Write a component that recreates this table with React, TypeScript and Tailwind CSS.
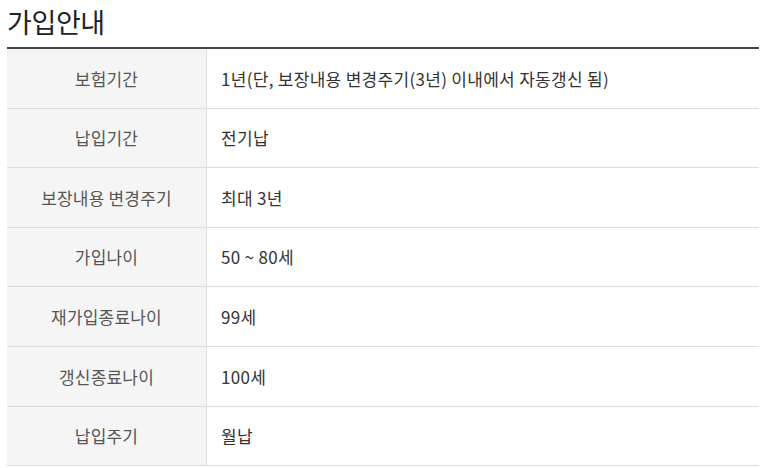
import React from 'react';

const rows = [
  { label: '보험기간', value: '1년(단, 보장내용 변경주기(3년) 이내에서 자동갱신 됨)' },
  { label: '납입기간', value: '전기납' },
  { label: '보장내용 변경주기', value: '최대 3년' },
  { label: '가입나이', value: '50 ~ 80세' },
  { label: '재가입종료나이', value: '99세' },
  { label: '갱신종료나이', value: '100세' },
  { label: '납입주기', value: '월납' },
];

const App: React.FC = () => {
  return (
    <div
      className="w-[760px] h-[468px] bg-white overflow-hidden pl-[7px] pr-[1px]"
      style={{ fontFamily: '"Noto Sans CJK KR", "Noto Sans", sans-serif' }}
    >
      {/* Title */}
      <h2 className="h-[47px] pt-[3px] text-[27px] leading-[38px] text-[#222] tracking-[-0.4px]">가입안내</h2>

      {/* Info table */}
      <div className="border-t-2 border-[#444]">
        {rows.map((row, i) => (
          <div key={i} className="flex h-[59.6px] border-b border-[#ddd]">
            <div className="w-[200px] shrink-0 flex items-center justify-center bg-[#f5f5f5] border-r border-[#ddd] text-[17px] tracking-[0.2px] text-[#555]">
              {row.label}
            </div>
            <div className="flex-1 flex items-center pl-[14px] text-[17px] tracking-[0.3px] text-[#333]">{row.value}</div>
          </div>
        ))}
      </div>
    </div>
  );
};

export default App;
